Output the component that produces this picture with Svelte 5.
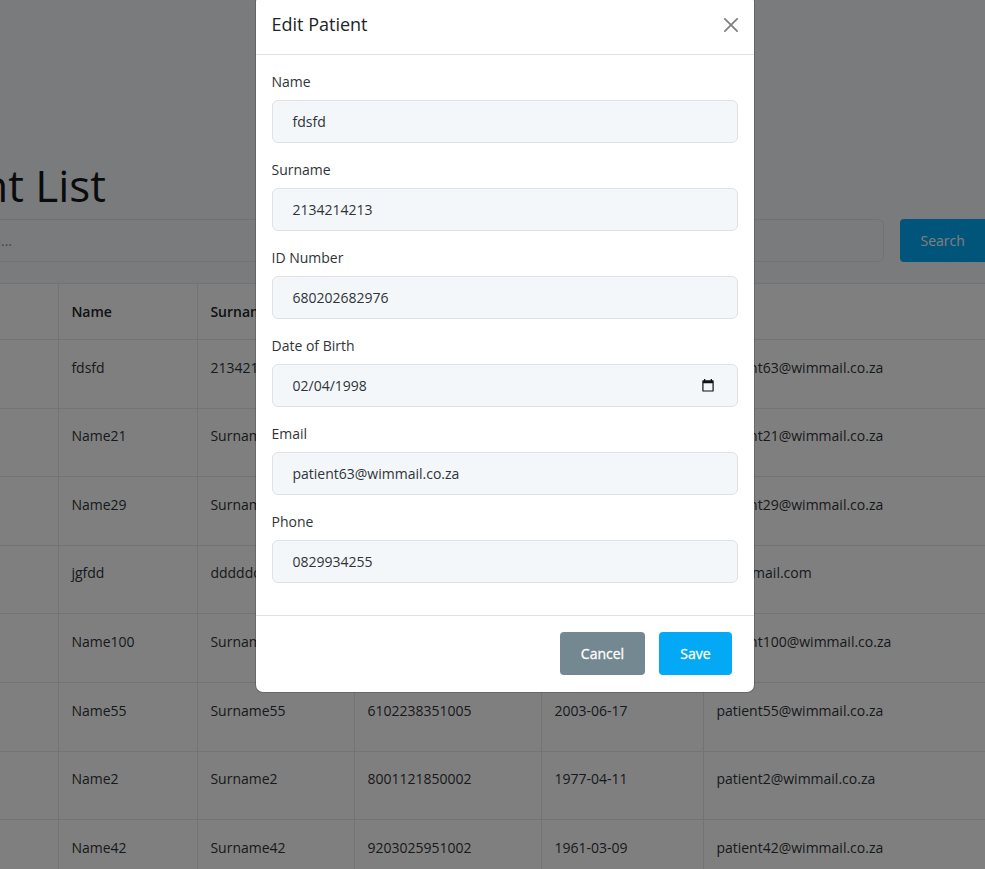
<script>
  const rows = [
    ['', 'fdsfd', '2134214213', '680202682976', '1998-02-04', 'patient63@wimmail.co.za'],
    ['', 'Name21', 'Surname21', '', '', 'patient21@wimmail.co.za'],
    ['', 'Name29', 'Surname29', '', '', 'patient29@wimmail.co.za'],
    ['', 'jgfdd', 'dddddd', '', '', 'aa@gmail.com'],
    ['', 'Name100', 'Surname100', '', '', 'patient100@wimmail.co.za'],
    ['', 'Name55', 'Surname55', '6102238351005', '2003-06-17', 'patient55@wimmail.co.za'],
    ['', 'Name2', 'Surname2', '8001121850002', '1977-04-11', 'patient2@wimmail.co.za'],
    ['', 'Name42', 'Surname42', '9203025951002', '1961-03-09', 'patient42@wimmail.co.za']
  ];
  const fields = [
    { label: 'Name', value: 'fdsfd' },
    { label: 'Surname', value: '2134214213' },
    { label: 'ID Number', value: '680202682976' },
    { label: 'Date of Birth', value: '02/04/1998', date: true },
    { label: 'Email', value: 'patient63@wimmail.co.za' },
    { label: 'Phone', value: '0829934255' }
  ];
</script>

<div class="screen">
  <main class="page">
    <h1><span>Patient List</span></h1>
    <div class="search">
      <div class="query"><span>Search...</span></div>
      <button class="btn primary find">Search</button>
    </div>
    <div class="table">
      <div class="row head">
        {#each ['', 'Name', 'Surname', '', '', ''] as h}
          <div class="cell">{h}</div>
        {/each}
      </div>
      {#each rows as row}
        <div class="row">
          {#each row as value}
            <div class="cell">{value}</div>
          {/each}
        </div>
      {/each}
    </div>
  </main>

  <div class="backdrop">
    <div class="modal" role="dialog" aria-label="Edit Patient">
      <header>
        <h5>Edit Patient</h5>
        <svg width="14" height="14" viewBox="0 0 16 16" fill="#000" fill-opacity=".5">
          <path d="M.293.293a1 1 0 0 1 1.414 0L8 6.586 14.293.293a1 1 0 1 1 1.414 1.414L9.414 8l6.293 6.293a1 1 0 0 1-1.414 1.414L8 9.414l-6.293 6.293a1 1 0 0 1-1.414-1.414L6.586 8 .293 1.707a1 1 0 0 1 0-1.414z" />
        </svg>
      </header>
      <div class="body">
        {#each fields as f}
          <div class="field">
            <div class="label">{f.label}</div>
            <div class="input">
              <span>{f.value}</span>
              {#if f.date}
                <svg width="12" height="13" viewBox="0 0 12 13">
                  <path d="M2 0h1.3v1.2h5.4V0H10v1.2h.8q.9 0 .9.9v9.6q0 .9-.9.9H1.2q-.9 0-.9-.9V2.100q0-.9.9-.9H2zM1.500 4.200v7.200h9V4.200z" fill="#101214" fill-rule="evenodd" />
                </svg>
              {/if}
            </div>
          </div>
        {/each}
      </div>
      <footer>
        <button class="btn secondary cancel">Cancel</button>
        <button class="btn primary save">Save</button>
      </footer>
    </div>
  </div>
</div>

<style>
  :global(body) { margin: 0; overflow: hidden; }
  .screen {
    position: relative;
    width: 985px;
    height: 869px;
    overflow: hidden;
    background: #f4f7fa;
    color: #2f3438;
    font: 14px/21px 'Open Sans', 'Noto Sans', sans-serif;
  }
  .screen * { box-sizing: border-box; }
  .page { padding-top: 158px; }
  h1 {
    width: 106px;
    height: 54px;
    margin: 0 0 7px;
    display: flex;
    justify-content: flex-end;
    font-size: 44px;
    line-height: 54px;
    font-weight: 400;
    color: #141619;
    white-space: nowrap;
  }
  .search { display: flex; gap: 16px; height: 43px; width: 1010px; }
  .query {
    width: 884px;
    border: 1px solid #e1e5ea;
    border-left: 0;
    border-radius: 0 6px 6px 0;
    line-height: 41px;
    color: #868e96;
  }
  .query span { display: flex; justify-content: flex-end; width: 12px; white-space: nowrap; }
  .table {
    margin-top: 21px;
    background: #fff;
    border-top: 1px solid #e4e6e9;
  }
  .row {
    display: grid;
    grid-template-columns: 59px 139px 157px 187px 162px 1fr;
    height: 68.6px;
    border-bottom: 1px solid #e4e6e9;
  }
  .cell { padding: 16.7px 12px 0 12.4px; border-right: 1px solid #e4e6e9; white-space: nowrap; }
  .cell:last-child { border-right: 0; }
  .row.head { height: 56px; font-weight: 600; color: #212529; }
  .btn {
    height: 43px;
    padding: 0;
    border: 0;
    border-radius: 4px;
    font: inherit;
    color: #fff;
  }
  .primary { background: #03a9f4; }
  .secondary { background: #748892; }
  .find { width: 110px; padding-left: 20.5px; text-align: left; }
  .cancel { width: 85px; -webkit-text-stroke: 0.3px #fff; }
  .save { width: 73px; -webkit-text-stroke: 0.3px #fff; }
  .backdrop {
    position: absolute;
    inset: 0;
    background: rgba(0, 0, 0, 0.5);
  }
  .modal {
    width: 500px;
    height: 699px;
    margin: -6px 0 0 255px;
    border: 1px solid rgba(0, 0, 0, 0.18);
    border-radius: 8px;
    background: #fff;
    background-clip: padding-box;
    display: flex;
    flex-direction: column;
  }
  header {
    height: 60px;
    border-bottom: 1px solid #dee2e6;
    display: flex;
    align-items: center;
    justify-content: space-between;
    padding: 0 16px 0 15.5px;
  }
  header svg { display: block; }
  h5 { margin: 0; font-size: 18px; line-height: 27px; font-weight: 400; color: #212529; }
  .body { flex: 1; padding: 16px 16px 0; }
  .field { height: 88px; }
  .label { height: 29px; margin-left: -0.5px; }
  .input {
    height: 43px;
    border: 1px solid #dee2e6;
    border-radius: 6px;
    background: #f3f7fa;
    padding: 0 23px 0 19.5px;
    display: flex;
    align-items: center;
    justify-content: space-between;
  }
  footer {
    height: 77px;
    border-top: 1px solid #dee2e6;
    display: flex;
    justify-content: flex-end;
    gap: 14px;
    padding: 16px 22px 0;
  }
</style>
